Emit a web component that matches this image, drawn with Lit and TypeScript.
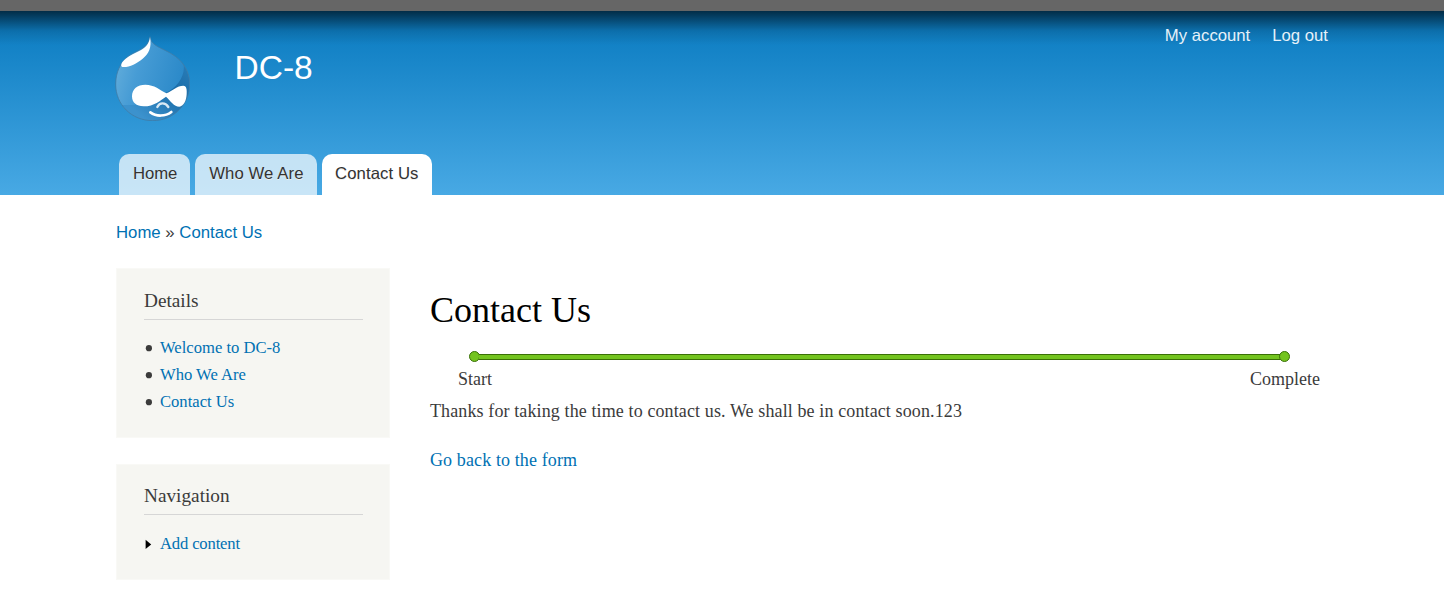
import { LitElement, html, css } from 'lit';
import { customElement, property } from 'lit/decorators.js';

@customElement('site-logo')
class SiteLogo extends LitElement {
  static styles = css`
    :host {
      display: block;
      width: 75px;
      height: 85px;
    }
    svg {
      display: block;
    }
  `;

  render() {
    return html`
      <svg width="75" height="85" viewBox="30 18 225 255">
        <defs>
          <linearGradient id="body" x1="0" y1="0.3" x2="1" y2="0.6">
            <stop offset="0" stop-color="#62addb" />
            <stop offset="0.3" stop-color="#479cd5" />
            <stop offset="1" stop-color="#2585c6" />
          </linearGradient>
          <linearGradient id="shade" x1="1" y1="0" x2="0.2" y2="0.8">
            <stop offset="0" stop-color="#2b7fba" />
            <stop offset="0.45" stop-color="#1a6ca8" />
            <stop offset="1" stop-color="#3c92cd" />
          </linearGradient>
          <clipPath id="drop">
            <path d="M135 20 C137 36 145 43 166 54 C188 65 207 73 225 91 C244 111 254 136 254 162 C254 226 203 272 143 272 C80 272 32 224 32 163 C32 127 46 99 68 80 C96 60 131 56 135 20Z" />
          </clipPath>
        </defs>
        <g clip-path="url(#drop)">
          <rect x="30" y="18" width="226" height="256" fill="url(#body)" />
          <path d="M235 98 C243 137 217 174 180 189 C160 208 130 227 90 225 L44 225 L60 275 L260 275 L260 100Z" fill="url(#shade)" />
        </g>
        <path d="M135 20 C137 36 145 43 166 54 C188 65 207 73 225 91 C244 111 254 136 254 162 C254 226 203 272 143 272 C80 272 32 224 32 163 C32 127 46 99 68 80 C96 60 131 56 135 20Z"
          fill="none" stroke="#3f7ca7" stroke-width="2.5" />
        <path d="M135 22 C141 52 131 72 113 86 C94 101 72 113 52 111 C45 107 50 95 62 86 C76 74 90 69 104 62 C120 55 132 44 135 22Z" fill="#ffffff" />
        <path d="M81 199 C81 177 97 164 121 164 C148 164 165 180 184 190 C201 183 217 167 235 167 C245 167 246 180 245 193 C244 211 237 229 223 230 C207 230 196 212 183 200 C166 211 148 229 116 229 C94 229 81 218 81 199Z" fill="#ffffff" />
        <path d="M157 231 C164 216 181 217 190 231" fill="none" stroke="#d9e9f4" stroke-width="7" stroke-linecap="round" />
        <path d="M136 247 C153 260 181 260 199 246" fill="none" stroke="#ffffff" stroke-width="8" stroke-linecap="round" />
      </svg>
    `;
  }
}

@customElement('sidebar-block')
class SidebarBlock extends LitElement {
  @property() heading = '';
  @property({ type: Array }) links: string[] = [];
  @property({ type: Boolean }) collapsed = false;

  static styles = css`
    :host {
      display: block;
      box-sizing: border-box;
      padding: 19px 26px 21px 27px;
      border: 1px solid #f9f9f6;
      background: #f6f6f2;
      background-clip: padding-box;
    }
    h2 {
      margin: 0 0 14px;
      padding-bottom: 5px;
      border-bottom: 1px solid #d6d6d6;
      font-size: 19.28px;
      font-weight: normal;
      line-height: 26px;
    }
    ul {
      margin: 0;
      padding: 0;
      list-style: none;
    }
    li {
      display: flex;
      align-items: center;
      height: 27px;
      font-size: 16.6px;
    }
    .marker {
      width: 16px;
      height: 10px;
    }
    a {
      color: #0071b3;
      text-decoration: none;
    }
    :host([collapsed]) h2 {
      margin: -1px 0 15px;
    }
    :host([collapsed]) li {
      letter-spacing: -0.15px;
    }
  `;

  render() {
    return html`
      <h2>${this.heading}</h2>
      <ul>
        ${this.links.map(
          (link) => html`
            <li>
              <svg class="marker" viewBox="0 0 16 10">
                ${this.collapsed ? this._arrow() : this._bullet()}
              </svg>
              <a>${link}</a>
            </li>
          `
        )}
      </ul>
    `;
  }

  _bullet() {
    return html`<svg><circle cx="4.9" cy="5.2" r="3.1" fill="#3b3b3b" /></svg>`;
  }

  _arrow() {
    return html`<svg><path d="M1.6 0.8 L7.2 5.6 L1.6 10Z" fill="#000" /></svg>`;
  }
}

@customElement('app-root')
class AppRoot extends LitElement {
  static styles = css`
    :host {
      display: block;
      height: 591px;
      overflow: hidden;
      background: #fff;
      color: #3b3b3b;
      font-family: 'Liberation Serif', 'Times New Roman', serif;
      font-size: 18px;
    }
    a {
      color: #0071b3;
      text-decoration: none;
    }
    .toolbar {
      height: 11px;
      background: #666;
    }
    header {
      display: flex;
      flex-direction: column;
      justify-content: space-between;
      box-sizing: border-box;
      height: 184px;
      padding: 0 116px 0 115px;
      background:
        linear-gradient(rgba(0, 0, 0, 0.63), rgba(0, 0, 0, 0.4) 9px, rgba(0, 0, 0, 0.12) 20px, rgba(0, 0, 0, 0) 34px),
        linear-gradient(#0779bf, #48a9e4);
      font-family: 'Liberation Sans', Arial, sans-serif;
    }
    .branding {
      display: flex;
      align-items: flex-start;
    }
    site-logo {
      margin: 25px 44.5px 0 0;
    }
    .site-name {
      flex: 1;
      margin-top: 37px;
      color: #fffeff;
      font-size: 33.5px;
      line-height: 40px;
    }
    .account {
      display: flex;
      gap: 22px;
      margin-top: 15px;
      font-size: 16.72px;
      line-height: 20px;
    }
    .account a {
      color: #e6f1f9;
    }
    .tabs {
      display: flex;
      gap: 5px;
      padding-left: 4px;
    }
    .tab {
      box-sizing: border-box;
      height: 41px;
      padding: 0 13px 0 14px;
      border-radius: 10px 10px 0 0;
      background: rgba(255, 255, 255, 0.7);
      color: #333;
      font-size: 16.72px;
      line-height: 39px;
      text-shadow: 0 1px #eee;
    }
    .tab:first-child {
      letter-spacing: -0.1px;
    }
    .tab:nth-child(2) {
      letter-spacing: 0.1px;
    }
    .tab.active {
      padding: 0 13.5px;
      background: #fff;
      letter-spacing: 0.08px;
    }
    .breadcrumb {
      padding: 28px 116px 25px;
      font-family: 'Liberation Sans', Arial, sans-serif;
      font-size: 16.76px;
      line-height: 20px;
    }
    .columns {
      display: grid;
      grid-template-columns: 274px 890px;
      column-gap: 40px;
      padding-left: 116px;
    }
    aside {
      display: flex;
      flex-direction: column;
      gap: 26px;
    }
    .details {
      height: 170px;
    }
    .navigation {
      height: 116px;
    }
    main {
      padding-top: 21px;
    }
    h1 {
      margin: 0;
      color: #000;
      font-size: 36px;
      font-weight: normal;
      line-height: 42px;
    }
    .progress {
      display: flex;
      align-items: center;
      margin: 20px 30px 0 39px;
    }
    .dot {
      box-sizing: border-box;
      width: 11px;
      height: 11px;
      border: 1px solid #3a7006;
      border-radius: 50%;
      background: #73c41f;
    }
    .bar {
      flex: 1;
      box-sizing: border-box;
      height: 6px;
      margin: 0 -1px;
      border: solid #3a7006;
      border-width: 1px 0;
      background: #73c41f;
    }
    .labels {
      display: flex;
      justify-content: space-between;
      margin: 6px 0 0 28px;
      line-height: 22px;
    }
    .message {
      letter-spacing: 0.115px;
    }
    p {
      margin: 10px 0 28px;
      line-height: 22px;
    }
  `;

  render() {
    return html`
      <div class="toolbar"></div>
      <header>
        <div class="branding">
          <site-logo></site-logo>
          <div class="site-name">DC-8</div>
          <nav class="account"><a>My account</a><a>Log out</a></nav>
        </div>
        <nav class="tabs">
          <a class="tab">Home</a>
          <a class="tab">Who We Are</a>
          <a class="tab active">Contact Us</a>
        </nav>
      </header>
      <div class="breadcrumb"><a>Home</a> » <a>Contact Us</a></div>
      <div class="columns">
        <aside>
          <sidebar-block class="details" heading="Details" .links=${['Welcome to DC-8', 'Who We Are', 'Contact Us']}></sidebar-block>
          <sidebar-block class="navigation" heading="Navigation" .links=${['Add content']} collapsed></sidebar-block>
        </aside>
        <main>
          <h1>Contact Us</h1>
          <div class="progress">
            <span class="dot"></span>
            <span class="bar"></span>
            <span class="dot"></span>
          </div>
          <div class="labels"><span>Start</span><span>Complete</span></div>
          <div class="message">
            <p>Thanks for taking the time to contact us. We shall be in contact soon.123</p>
            <a>Go back to the form</a>
          </div>
        </main>
      </div>
    `;
  }
}
